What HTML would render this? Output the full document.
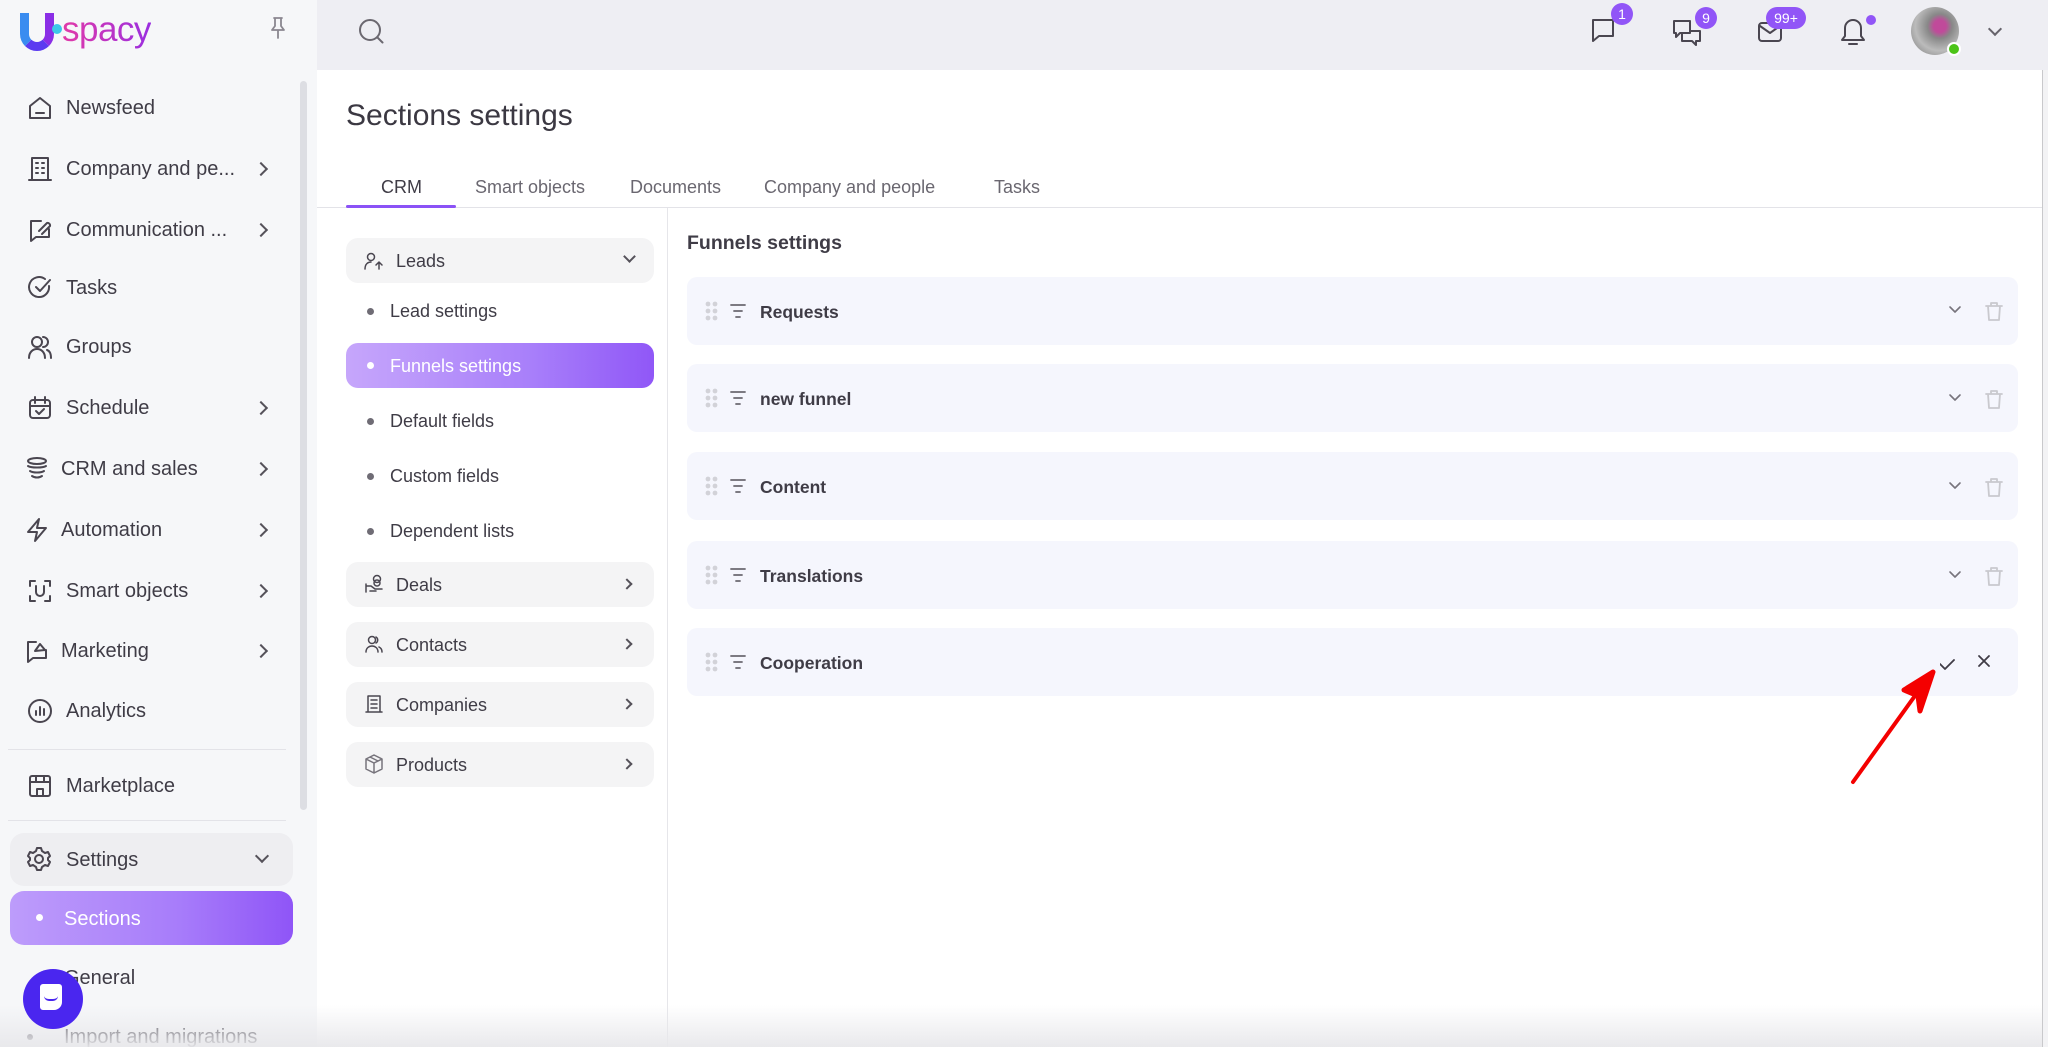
<!DOCTYPE html>
<html><head><meta charset="utf-8">
<style>
*{margin:0;padding:0;box-sizing:border-box}
body{width:2048px;height:1047px;overflow:hidden;background:#fff;font-family:"Liberation Sans",sans-serif;color:#3f3c46;position:relative}
.a{position:absolute}
svg{position:absolute;fill:none;stroke:#4a4650;stroke-width:2;stroke-linecap:round;stroke-linejoin:round}
.side{left:0;top:0;width:317px;height:1047px;background:#f6f7f9}
.si{position:absolute;left:66px;font-size:20px;color:#3f3c46;line-height:24px}
.chev{position:absolute;left:256px;width:10px;height:10px;border-right:2.2px solid #55525a;border-top:2.2px solid #55525a;transform:rotate(45deg)}
.tab{position:absolute;top:177px;font-size:18px;color:#6a6770}
.box{position:absolute;left:346px;width:308px;height:45px;background:#f4f4f5;border-radius:12px}
.bt{position:absolute;left:50px;top:13px;font-size:18px;color:#3f3c46}
.sub{position:absolute;left:390px;font-size:18px;color:#3f3c46}
.dot{position:absolute;left:367px;width:7px;height:7px;border-radius:50%;background:#6f6c75}
.row{position:absolute;left:687px;width:1331px;height:68px;background:#f5f6fd;border-radius:10px}
.rt{position:absolute;left:73px;top:25px;font-size:17.5px;font-weight:bold;color:#3f3c46}
.badge{position:absolute;background:#9155f7;color:#fff;font-size:14px;border-radius:12px;height:22px;line-height:22px;text-align:center;padding:0 6px}
</style></head><body>

<!-- header -->
<div class="a" style="left:317px;top:0;width:1731px;height:70px;background:#eeeef3"></div>
<svg style="left:358px;top:18px" width="28" height="28" viewBox="0 0 28 28"><circle cx="12" cy="12" r="10" stroke="#6b6870"/><path d="M19.5 19.5l5 5" stroke="#6b6870"/></svg>

<svg style="left:1589px;top:16px" width="28" height="28" viewBox="0 0 28 28"><path d="M4 4h20v16H10l-6 5z"/></svg>
<div class="badge" style="left:1611px;top:3px;width:22px;padding:0">1</div>
<svg style="left:1672px;top:19px" width="30" height="28" viewBox="0 0 30 28"><path d="M2 2h16v12H8l-4 4V14H2z"/><path d="M10 14v8h10l4 4v-4h4V12h-10"/></svg>
<div class="badge" style="left:1695px;top:7px;width:22px;padding:0">9</div>
<svg style="left:1757px;top:21px" width="26" height="22" viewBox="0 0 26 22"><rect x="2" y="2" width="22" height="18" rx="3"/><path d="M3 5l10 7 10-7"/></svg>
<div class="badge" style="left:1766px;top:7px;width:40px;padding:0">99+</div>
<svg style="left:1840px;top:18px" width="26" height="28" viewBox="0 0 26 28"><path d="M13 2a8 8 0 0 0-8 8v8l-3 4h22l-3-4v-8a8 8 0 0 0-8-8zM9 26h8"/></svg>
<div class="a" style="left:1866px;top:15px;width:10px;height:10px;border-radius:50%;background:#9155f7"></div>
<div class="a" style="left:1911px;top:7px;width:48px;height:48px;border-radius:50%;background:radial-gradient(circle at 60% 40%,#c04a9a 0,#c04a9a 15%,#888 30%,#bbb 60%,#777 100%)"></div>
<div class="a" style="left:1947px;top:42px;width:14px;height:14px;border-radius:50%;background:#4cc418;border:2px solid #fff"></div>
<div class="a" style="left:1990px;top:24px;width:10px;height:10px;border-right:2.2px solid #66636b;border-bottom:2.2px solid #66636b;transform:rotate(45deg)"></div>

<!-- sidebar -->
<div class="a side"></div>
<div class="a" style="left:20px;top:13px;width:34px;height:38px;border:9px solid #4b45ee;border-top:none;border-radius:0 0 17px 17px;border-color:#3b6cf0 #8a2ee6 #5b3bf0 #3a8cf0"></div>
<div class="a" style="left:52px;top:24px;width:10px;height:10px;border-radius:50%;background:#3cc8e8"></div>
<div class="a" style="left:62px;top:10px;font-size:35px;color:#c23bd4;letter-spacing:-0.5px;background:linear-gradient(90deg,#e23aa8,#9a2ee0);-webkit-background-clip:text;background-clip:text;-webkit-text-fill-color:transparent">spacy</div>
<svg style="left:268px;top:16px" width="20" height="24" viewBox="0 0 20 24"><path d="M6 2h8M7 2v8l-3 4h12l-3-4V2M10 14v8" stroke="#8a8790" stroke-width="1.8"/></svg>
<div class="a" style="left:300px;top:81px;width:7px;height:729px;background:#dddee3;border-radius:4px"></div>

<svg style="left:27px;top:95px" width="26" height="26" viewBox="0 0 26 26"><path d="M3 11l10-8 10 8v12H3zM9 18h8"/></svg><div class="si" style="top:96px">Newsfeed</div>
<svg style="left:27px;top:156px" width="26" height="26" viewBox="0 0 26 26"><path d="M5 2h16v22H5zM2 24h22M9 7h2M15 7h2M9 12h2M15 12h2M9 17h2M15 17h2"/></svg><div class="si" style="top:157px">Company and pe...</div><div class="chev" style="top:164px"></div>
<svg style="left:27px;top:217px" width="26" height="26" viewBox="0 0 26 26"><path d="M14 4H4v20l5-4h13v-8M12 14l8-8a2.5 2.5 0 0 1 3 3l-8 8"/></svg><div class="si" style="top:218px">Communication ...</div><div class="chev" style="top:225px"></div>
<svg style="left:27px;top:275px" width="26" height="26" viewBox="0 0 26 26"><path d="M22 11a10 10 0 1 1-4-7M9 12l4 4 10-11"/></svg><div class="si" style="top:276px">Tasks</div>
<svg style="left:27px;top:334px" width="26" height="26" viewBox="0 0 26 26"><circle cx="10" cy="8" r="5"/><path d="M2 24c0-6 4-9 8-9s8 3 8 9M16 3a5 5 0 0 1 0 10M20 16c3 1 4 4 4 8"/></svg><div class="si" style="top:335px">Groups</div>
<svg style="left:27px;top:395px" width="26" height="26" viewBox="0 0 26 26"><rect x="3" y="5" width="20" height="18" rx="3"/><path d="M8 2v6M18 2v6M3 11h20M9 16l3 3 5-5"/></svg><div class="si" style="top:396px">Schedule</div><div class="chev" style="top:403px"></div>
<svg style="left:24px;top:456px" width="26" height="26" viewBox="0 0 26 26"><ellipse cx="13" cy="5" rx="9" ry="3"/><path d="M4 10c3 2 15 2 18 0M6 15c3 2 11 2 14 0M8 20c3 2 7 2 10 0"/></svg><div class="si" style="left:61px;top:457px">CRM and sales</div><div class="chev" style="top:464px"></div>
<svg style="left:24px;top:517px" width="26" height="26" viewBox="0 0 26 26"><path d="M15 2L4 15h9l-2 9 11-13h-9z"/></svg><div class="si" style="left:61px;top:518px">Automation</div><div class="chev" style="top:525px"></div>
<svg style="left:27px;top:578px" width="26" height="26" viewBox="0 0 26 26"><path d="M3 8V3h5M18 3h5v5M23 18v5h-5M8 23H3v-5M9 8v6a4 4 0 0 0 8 0V8"/></svg><div class="si" style="top:579px">Smart objects</div><div class="chev" style="top:586px"></div>
<svg style="left:24px;top:638px" width="26" height="26" viewBox="0 0 26 26"><path d="M12 4H4v20l5-4h13v-8M11 13l5-7 5 6z"/></svg><div class="si" style="left:61px;top:639px">Marketing</div><div class="chev" style="top:646px"></div>
<svg style="left:27px;top:698px" width="26" height="26" viewBox="0 0 26 26"><circle cx="13" cy="13" r="11"/><path d="M9 17v-4M13 17V9M17 17v-6"/></svg><div class="si" style="top:699px">Analytics</div>
<div class="a" style="left:8px;top:749px;width:278px;height:1px;background:#e3e3e8"></div>
<svg style="left:27px;top:773px" width="26" height="26" viewBox="0 0 26 26"><rect x="3" y="3" width="20" height="20" rx="2"/><path d="M3 9h20M10 23v-7h6v7M9 3v6M17 3v6"/></svg><div class="si" style="top:774px">Marketplace</div>
<div class="a" style="left:8px;top:820px;width:278px;height:1px;background:#e3e3e8"></div>
<div class="a" style="left:10px;top:833px;width:283px;height:53px;background:#eeeef1;border-radius:14px"></div>
<svg style="left:26px;top:846px" width="26" height="26" viewBox="0 0 26 26"><circle cx="13" cy="13" r="4"/><path d="M11 2h4l1 3 3 2 3-1 2 4-2 2v2l2 2-2 4-3-1-3 2-1 3h-4l-1-3-3-2-3 1-2-4 2-2v-2L2 10l2-4 3 1 3-2z"/></svg><div class="si" style="top:848px">Settings</div>
<div class="a" style="left:257px;top:851px;width:10px;height:10px;border-right:2.2px solid #55525a;border-bottom:2.2px solid #55525a;transform:rotate(45deg)"></div>
<div class="a" style="left:10px;top:891px;width:283px;height:54px;border-radius:14px;background:linear-gradient(90deg,#bd9cfb,#a77cfa 60%,#8f55f7)"></div>
<div class="a" style="left:36px;top:914px;width:7px;height:7px;border-radius:50%;background:#fff"></div>
<div class="si" style="left:64px;top:907px;color:#fff">Sections</div>
<div class="si" style="left:64px;top:966px">General</div>
<div class="a" style="left:27px;top:1034px;width:6px;height:6px;border-radius:50%;background:#6f6c75"></div>
<div class="si" style="left:64px;top:1025px">Import and migrations</div>

<!-- main -->
<div class="a" style="left:317px;top:70px;width:1725px;height:977px;background:#fff"></div>
<div class="a" style="left:2042px;top:70px;width:6px;height:977px;background:#f3f3f5;border-left:1px solid #c9c9cc"></div>
<div class="a" style="left:346px;top:99px;font-size:30px;color:#3b3842">Sections settings</div>
<div class="a" style="left:317px;top:207px;width:1725px;height:1px;background:#e3e3e8"></div>
<div class="tab" style="left:381px;color:#3f3c46">CRM</div>
<div class="a" style="left:346px;top:205px;width:110px;height:3px;background:#8b52f6;border-radius:2px"></div>
<div class="tab" style="left:475px">Smart objects</div>
<div class="tab" style="left:630px">Documents</div>
<div class="tab" style="left:764px">Company and people</div>
<div class="tab" style="left:994px">Tasks</div>
<div class="a" style="left:667px;top:208px;width:1px;height:839px;background:#e6e6ea"></div>

<div class="box" style="top:238px"><svg style="left:18px;top:13px" width="20" height="20" viewBox="0 0 20 20"><circle cx="7" cy="6" r="3.5" stroke-width="1.5"/><path d="M1 18c0-5 3-7 6-7M15 18v-6M12 14l3-3 3 3" stroke-width="1.5"/></svg><div class="bt">Leads</div><div class="a" style="left:279px;top:14px;width:9px;height:9px;border-right:2px solid #55525a;border-bottom:2px solid #55525a;transform:rotate(45deg)"></div></div>
<div class="dot" style="top:308px"></div><div class="sub" style="top:301px">Lead settings</div>
<div class="a" style="left:346px;top:343px;width:308px;height:45px;border-radius:12px;background:linear-gradient(90deg,#c6a6fb,#a87ffa 60%,#9057f7)"></div>
<div class="dot" style="top:362px;background:#fff"></div><div class="sub" style="top:356px;color:#fff">Funnels settings</div>
<div class="dot" style="top:418px"></div><div class="sub" style="top:411px">Default fields</div>
<div class="dot" style="top:473px"></div><div class="sub" style="top:466px">Custom fields</div>
<div class="dot" style="top:528px"></div><div class="sub" style="top:521px">Dependent lists</div>
<div class="box" style="top:562px"><svg style="left:18px;top:12px" width="20" height="20" viewBox="0 0 20 20"><circle cx="13" cy="5" r="3.5" stroke-width="1.5"/><circle cx="13" cy="9" r="3" stroke-width="1.5"/><path d="M2 10v8M2 12h5l4 3h7M6 17h6" stroke-width="1.5"/></svg><div class="bt">Deals</div><div class="chev" style="left:277px;top:18px;width:8px;height:8px;border-width:2px"></div></div>
<div class="box" style="top:622px"><svg style="left:18px;top:12px" width="20" height="20" viewBox="0 0 20 20"><circle cx="8" cy="6" r="3.5" stroke-width="1.5"/><path d="M2 18c0-4 3-6 6-6s6 2 6 6M12 3a3.5 3.5 0 0 1 0 6M15 13c2 1 3 3 3 5" stroke-width="1.5"/></svg><div class="bt">Contacts</div><div class="chev" style="left:277px;top:18px;width:8px;height:8px;border-width:2px"></div></div>
<div class="box" style="top:682px"><svg style="left:18px;top:12px" width="20" height="20" viewBox="0 0 20 20"><path d="M4 2h12v16H4zM2 18h16M7 6h6M7 10h6M7 14h6" stroke-width="1.5"/></svg><div class="bt">Companies</div><div class="chev" style="left:277px;top:18px;width:8px;height:8px;border-width:2px"></div></div>
<div class="box" style="top:742px"><svg style="left:18px;top:12px" width="20" height="20" viewBox="0 0 20 20"><path d="M10 1l8 4v10l-8 4-8-4V5zM2 5l8 4 8-4M10 9v10M6 3l8 4" stroke-width="1.5" stroke="#77747c"/></svg><div class="bt">Products</div><div class="chev" style="left:277px;top:18px;width:8px;height:8px;border-width:2px"></div></div>

<div class="a" style="left:687px;top:232px;font-size:19.5px;font-weight:bold;color:#3f3c46">Funnels settings</div>

<div class="row" style="top:277px"><div class="rt">Requests</div></div>
<div class="row" style="top:364px"><div class="rt">new funnel</div></div>
<div class="row" style="top:452px"><div class="rt">Content</div></div>
<div class="row" style="top:541px"><div class="rt">Translations</div></div>
<div class="row" style="top:628px"><div class="rt">Cooperation</div></div>

<!-- row decorations -->
<svg style="left:703px;top:0" width="60" height="700" viewBox="0 0 60 700">
<g fill="#d2d2d8" stroke="none">
<circle cx="5" cy="304" r="2.4"/><circle cx="12" cy="304" r="2.4"/><circle cx="5" cy="311" r="2.4"/><circle cx="12" cy="311" r="2.4"/><circle cx="5" cy="318" r="2.4"/><circle cx="12" cy="318" r="2.4"/>
<circle cx="5" cy="391" r="2.4"/><circle cx="12" cy="391" r="2.4"/><circle cx="5" cy="398" r="2.4"/><circle cx="12" cy="398" r="2.4"/><circle cx="5" cy="405" r="2.4"/><circle cx="12" cy="405" r="2.4"/>
<circle cx="5" cy="479" r="2.4"/><circle cx="12" cy="479" r="2.4"/><circle cx="5" cy="486" r="2.4"/><circle cx="12" cy="486" r="2.4"/><circle cx="5" cy="493" r="2.4"/><circle cx="12" cy="493" r="2.4"/>
<circle cx="5" cy="568" r="2.4"/><circle cx="12" cy="568" r="2.4"/><circle cx="5" cy="575" r="2.4"/><circle cx="12" cy="575" r="2.4"/><circle cx="5" cy="582" r="2.4"/><circle cx="12" cy="582" r="2.4"/>
<circle cx="5" cy="655" r="2.4"/><circle cx="12" cy="655" r="2.4"/><circle cx="5" cy="662" r="2.4"/><circle cx="12" cy="662" r="2.4"/><circle cx="5" cy="669" r="2.4"/><circle cx="12" cy="669" r="2.4"/>
</g>
<g stroke="#6b6870" stroke-width="1.8">
<path d="M28 305h14M31 311h8M33 317h4"/>
<path d="M28 392h14M31 398h8M33 404h4"/>
<path d="M28 480h14M31 486h8M33 492h4"/>
<path d="M28 569h14M31 575h8M33 581h4"/>
<path d="M28 656h14M31 662h8M33 668h4"/>
</g></svg>
<svg style="left:1940px;top:0" width="70" height="700" viewBox="0 0 70 700">
<g stroke="#77747c" stroke-width="1.6">
<path d="M10 307l5 5 5-5"/><path d="M10 395l5 5 5-5"/><path d="M10 483l5 5 5-5"/><path d="M10 572l5 5 5-5"/>
</g>
<g stroke="#c9c9ce" stroke-width="1.8">
<path d="M46 306h16M51 306v-3h6v3M48 306l1 14h10l1-14"/>
<path d="M46 394h16M51 394v-3h6v3M48 394l1 14h10l1-14"/>
<path d="M46 482h16M51 482v-3h6v3M48 482l1 14h10l1-14"/>
<path d="M46 571h16M51 571v-3h6v3M48 571l1 14h10l1-14"/>
</g>
<g stroke="#3f3c46" stroke-width="1.8">
<path d="M0 664l5 5 9-9"/><path d="M39 656l10 10M49 656l-10 10"/>
</g></svg>

<!-- red arrow -->
<svg style="left:1840px;top:660px" width="110" height="130" viewBox="0 0 110 130"><path d="M13 122L82 26" stroke="#f40000" stroke-width="4"/><path d="M93 12L64 30l14 6 2 15z" fill="#f40000" stroke="#f40000" stroke-width="5"/></svg>

<div class="a" style="left:0;top:1005px;width:2042px;height:42px;background:linear-gradient(180deg,rgba(255,255,255,0),rgba(232,232,235,0.95))"></div>
<div class="a" style="left:23px;top:969px;width:60px;height:60px;border-radius:50%;background:#4a26ef"></div>
<div class="a" style="left:40px;top:984px;width:22px;height:26px;background:#fff;border-radius:3px 3px 8px 3px"></div>
<div class="a" style="left:44px;top:996px;width:14px;height:5px;border-bottom:2px solid #4a26ef;border-radius:0 0 8px 8px"></div>
</body></html>
